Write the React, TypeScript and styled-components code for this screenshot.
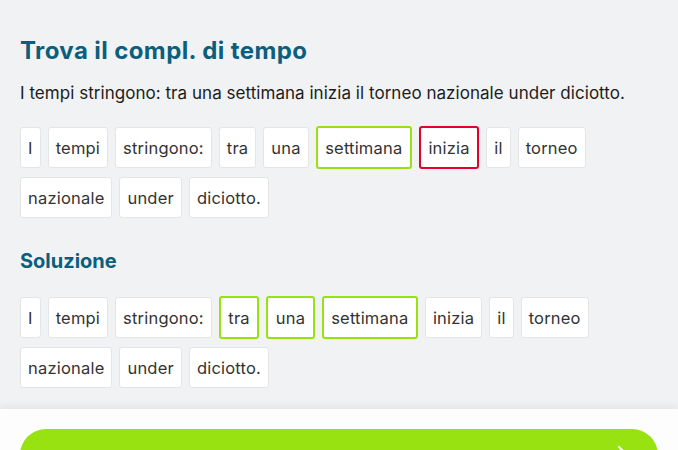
import React from "react";
import styled, { createGlobalStyle } from "styled-components";

type Mark = "none" | "right" | "wrong";

interface IWord {
  text: string;
  mark?: Mark;
}

const SENTENCE =
  "I tempi stringono: tra una settimana inizia il torneo nazionale under diciotto.";

const answer: IWord[] = SENTENCE.split(" ").map((text) => ({
  text,
  mark: text === "settimana" ? "right" : text === "inizia" ? "wrong" : "none",
}));

const solution: IWord[] = SENTENCE.split(" ").map((text) => ({
  text,
  mark: ["tra", "una", "settimana"].includes(text) ? "right" : "none",
}));

const GlobalStyle = createGlobalStyle`
  html, body {
    margin: 0;
    padding: 0;
    background: #f1f2f4;
    font-family: Inter, "Noto Sans", sans-serif;
    overflow: hidden;
  }
`;

const WordList = ({ words }: { words: IWord[] }) => (
  <WordsSC>
    {words.map((w, i) => (
      <ChipSC key={i} $mark={w.mark ?? "none"}>
        {w.text}
      </ChipSC>
    ))}
  </WordsSC>
);

export default function App() {
  return (
    <>
      <GlobalStyle />
      <PageSC>
        <TitleSC>Trova il compl. di tempo</TitleSC>
        <SentenceSC>{SENTENCE}</SentenceSC>
        <WordList words={answer} />
        <SubtitleSC>Soluzione</SubtitleSC>
        <WordList words={solution} />
      </PageSC>
      <FooterSC>
        <NextButtonSC>
          <svg width="14" height="22" viewBox="0 0 14 22" fill="none">
            <path
              d="M3 3l8 8-8 8"
              stroke="#fff"
              strokeWidth="2.2"
              strokeLinecap="round"
              strokeLinejoin="round"
            />
          </svg>
        </NextButtonSC>
      </FooterSC>
    </>
  );
}

const PageSC = styled.div`
  padding: 37px 20px 0;
`;

const TitleSC = styled.h1`
  margin: 0;
  font-size: 24px;
  line-height: 28px;
  font-weight: 700;
  color: #0b5e7d;
  letter-spacing: 0.4px;
`;

const SentenceSC = styled.p`
  margin: 17px 0 22px;
  font-size: 17px;
  line-height: 22px;
  color: #1c1c1c;
  letter-spacing: 0.04px;
`;

const SubtitleSC = styled.h2`
  margin: 30px 0 22px;
  font-size: 20px;
  line-height: 26px;
  font-weight: 700;
  color: #0b5e7d;
`;

const WordsSC = styled.div`
  display: flex;
  flex-wrap: wrap;
  align-items: center;
  column-gap: 7px;
  row-gap: 8px;
  width: 600px;
`;

const ChipSC = styled.span<{ $mark: Mark }>`
  display: inline-flex;
  align-items: center;
  box-sizing: border-box;
  height: ${(p) => (p.$mark === "none" ? "41px" : "43px")};
  padding: 0 ${(p) => (p.$mark === "none" ? "7px" : "7.5px")};
  background: #fff;
  border-radius: 3px;
  border: ${(p) =>
    p.$mark === "right"
      ? "2px solid #98e211"
      : p.$mark === "wrong"
      ? "2px solid #e4002b"
      : "1px solid #e4e5e7"};
  font-size: 16.5px;
  letter-spacing: 0.2px;
  color: #333;
`;

const FooterSC = styled.div`
  margin-top: 21px;
  background: #fdfdfd;
  box-shadow: 0 -3px 8px rgba(0, 0, 0, 0.06);
  padding: 20px 20px 20px;
`;

const NextButtonSC = styled.div`
  display: flex;
  align-items: center;
  justify-content: flex-end;
  height: 52px;
  padding: 0 28px;
  border-radius: 26px;
  background: #98e211;
`;
